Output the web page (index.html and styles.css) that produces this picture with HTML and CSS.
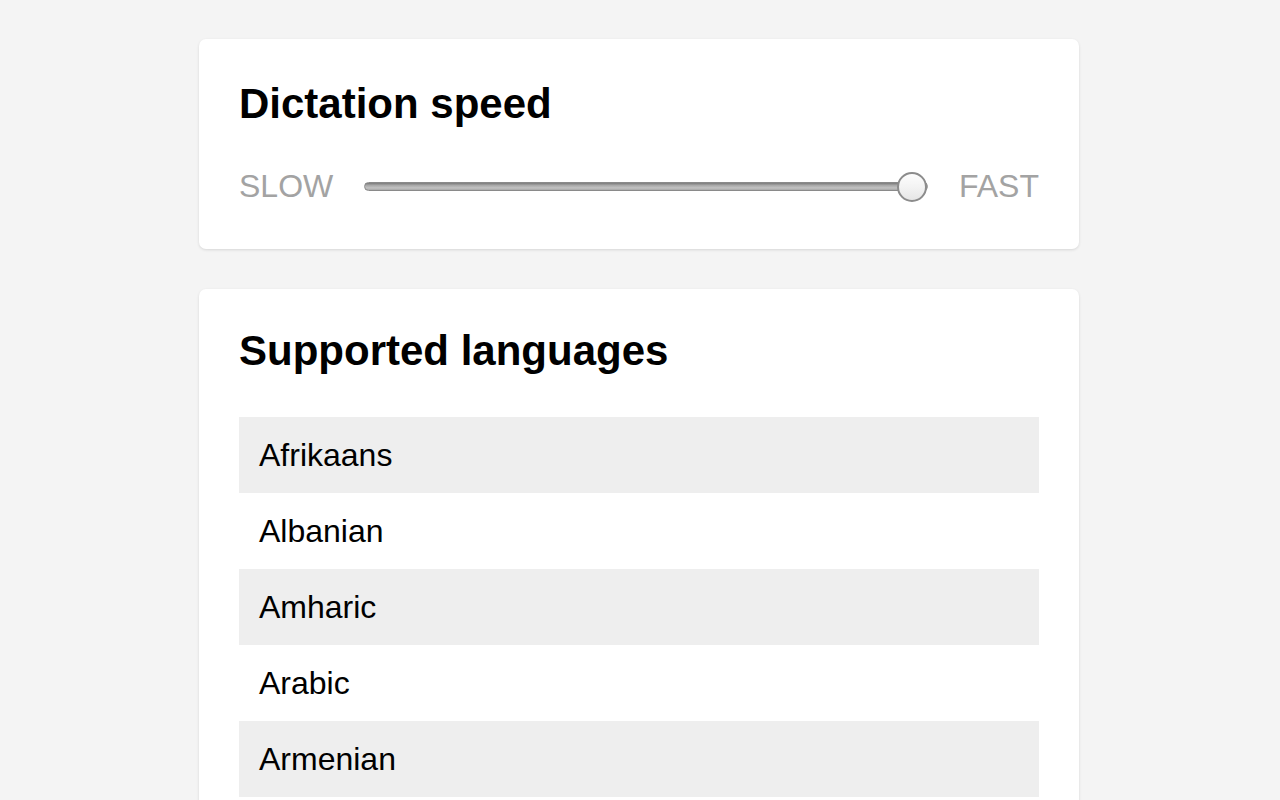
FILE: index.html
```html
<!DOCTYPE html>
<html lang="en">
<head>
<meta charset="utf-8">
<title>Dictation settings</title>
<link rel="stylesheet" href="styles.css">
</head>
<body>
<main class="page">
  <section class="card">
    <h2 class="card-title">Dictation speed</h2>
    <div class="speed-row">
      <span class="speed-label">SLOW</span>
      <input class="speed-slider" type="range" min="0" max="100" value="100">
      <span class="speed-label">FAST</span>
    </div>
  </section>
  <section class="card card-languages">
    <h2 class="card-title">Supported languages</h2>
    <ul class="lang-list">
      <li class="lang-item">Afrikaans</li>
      <li class="lang-item">Albanian</li>
      <li class="lang-item">Amharic</li>
      <li class="lang-item">Arabic</li>
      <li class="lang-item">Armenian</li>
    </ul>
  </section>
</main>
</body>
</html>
```

FILE: styles.css
```css
html, body {
  margin: 0;
  padding: 0;
}
body {
  background: #f4f4f4;
  font-family: "Liberation Sans", Arial, Helvetica, sans-serif;
  color: #000;
}
.page {
  width: 880px;
  margin: 0 auto;
  padding: 39px 0 40px;
  display: flex;
  flex-direction: column;
  gap: 40px;
  transform: translateX(-1px);
}
.card {
  background: #fff;
  border-radius: 7px;
  box-shadow: 0 1px 3px rgba(0, 0, 0, 0.12);
  padding: 41px 40px 44px;
}
.card-title {
  margin: 0;
  font-size: 42px;
  line-height: 48px;
  font-weight: bold;
  color: #000;
}
.speed-row {
  display: flex;
  align-items: center;
  gap: 31px;
  margin-top: 40px;
  height: 37px;
}
.speed-label {
  font-size: 32px;
  line-height: 37px;
  color: #a3a3a3;
}
.speed-slider {
  -webkit-appearance: none;
  appearance: none;
  flex: 1;
  margin: 0;
  height: 30px;
  background: transparent;
}
.speed-slider:focus {
  outline: none;
}
.speed-slider::-webkit-slider-runnable-track {
  height: 9px;
  border-radius: 5px;
  box-sizing: border-box;
  border: 1px solid #8a8a8a;
  background: linear-gradient(to bottom, #7a7a7a 0%, #a9a9a9 35%, #c2c2c2 70%, #a8a8a8 100%);
}
.speed-slider::-webkit-slider-thumb {
  -webkit-appearance: none;
  appearance: none;
  width: 30px;
  height: 30px;
  border-radius: 50%;
  box-sizing: border-box;
  border: 2px solid #8c8c8c;
  background: linear-gradient(to bottom, #fdfdfd 0%, #f3f3f3 50%, #e6e6e6 100%);
  margin-top: -11.5px;
}
.card-languages {
  padding-top: 38px;
}
.lang-list {
  list-style: none;
  margin: 42px 0 0;
  padding: 0;
}
.lang-item {
  height: 76px;
  line-height: 76px;
  padding-left: 20px;
  font-size: 32px;
}
.lang-item:nth-child(odd) {
  background: #eeeeee;
}
```
